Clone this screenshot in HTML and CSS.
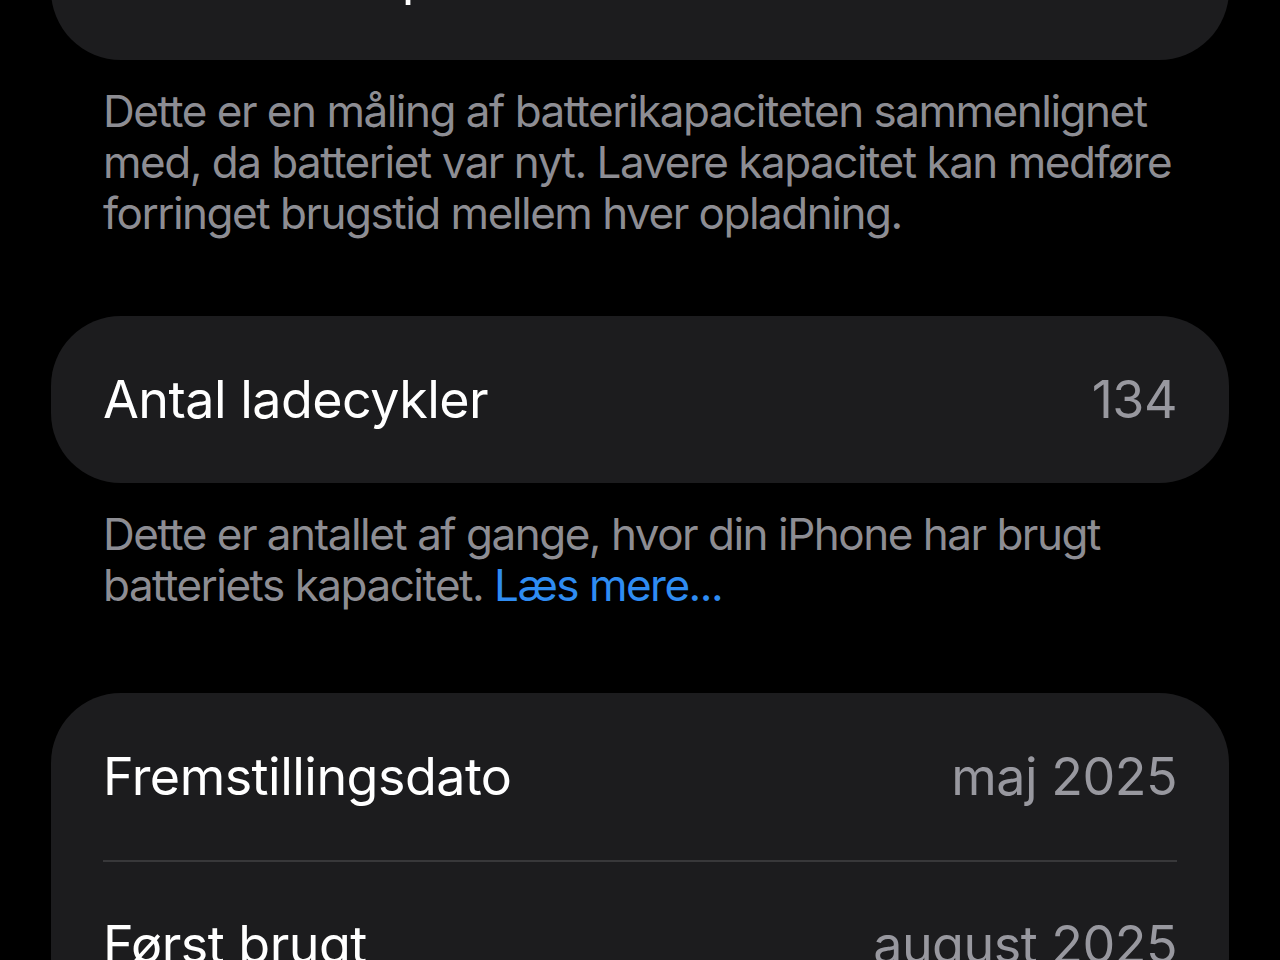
FILE: index.html
```html
<!DOCTYPE html>
<html lang="da">
<head>
  <meta charset="UTF-8">
  <meta name="viewport" content="width=device-width, initial-scale=1.0">
  <title>Batteritilstand</title>
  <link rel="stylesheet" href="styles.css">
</head>
<body>
  <div class="page">
    <section class="group group-first">
      <div class="card">
        <div class="row">
          <span class="label">Maksimal kapacitet</span>
          <span class="value">100 %</span>
        </div>
      </div>
      <p class="note">Dette er en måling af batterikapaciteten sammenlignet med, da batteriet var nyt. Lavere kapacitet kan medføre forringet brugstid mellem hver opladning.</p>
    </section>

    <section class="group">
      <div class="card">
        <div class="row">
          <span class="label">Antal ladecykler</span>
          <span class="value">134</span>
        </div>
      </div>
      <p class="note">Dette er antallet af gange, hvor din iPhone har brugt batteriets kapacitet. <a href="#">Læs mere...</a></p>
    </section>

    <section class="group">
      <div class="card">
        <div class="row">
          <span class="label">Fremstillingsdato</span>
          <span class="value">maj 2025</span>
        </div>
        <div class="row">
          <span class="label">Først brugt</span>
          <span class="value">august 2025</span>
        </div>
      </div>
    </section>
  </div>
</body>
</html>
```

FILE: styles.css
```css
html, body {
  margin: 0;
  padding: 0;
  background: #000;
  height: 100%;
  overflow: hidden;
}
body {
  font-family: Inter, "Noto Sans", sans-serif;
  color: #fff;
}
.page {
  padding: 0 51px;
}
.group {
  margin-bottom: 82px;
}
.group-first {
  margin-top: -107px;
  margin-bottom: 77px;
}
.card {
  background: #1c1c1e;
  border-radius: 70px;
  padding: 0 52px;
}
.row {
  display: flex;
  align-items: center;
  justify-content: space-between;
  height: 167px;
  font-size: 52px;
  letter-spacing: -0.01em;
}
.row + .row {
  border-top: 2px solid #38383a;
  height: 165px;
}
.label {
  color: #fff;
}
.value {
  color: #98989f;
}
.note {
  margin: 26px 52px 0;
  font-size: 44px;
  line-height: 51px;
  letter-spacing: -0.034em;
  color: #8d8d93;
}
.note a {
  color: #2f8cf2;
  text-decoration: none;
}
```
